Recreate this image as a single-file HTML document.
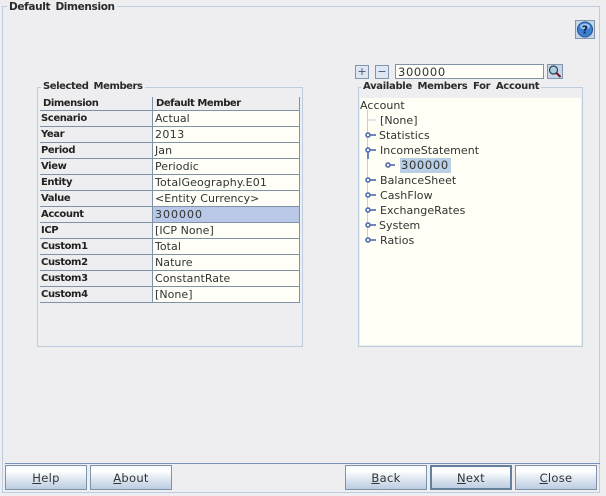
<!DOCTYPE html>
<html><head><meta charset="utf-8">
<style>
html,body{margin:0;padding:0}
body{width:606px;height:496px;overflow:hidden;background:#eeeef0;position:relative;font-family:"DejaVu Sans","Liberation Sans",sans-serif;font-size:11px;color:#222}
div{position:absolute;box-sizing:border-box;white-space:nowrap}
.gb{border:1px solid #bccde2}
.lg{background:#eeeef0;font-weight:bold;font-size:10px;color:#2a2a2a;line-height:12px;padding:0 2px;letter-spacing:-.42px;word-spacing:2px}
.rh{left:40px;width:113px;height:16px;border-bottom:1px solid #7f93a8;border-right:1px solid #7f93a8;font-weight:bold;font-size:10px;line-height:15px;padding-left:1px;color:#222;background:#eeeef0;letter-spacing:-.4px}
.rc{left:153px;width:147px;height:16px;border-bottom:1px solid #7f93a8;border-right:1px solid #7f93a8;background:#fffff8;line-height:15px;padding-left:2px;letter-spacing:.05px;color:#333}
.t{line-height:15px;letter-spacing:.05px;color:#333;height:15px}
.hd{top:97px;height:14px;border-bottom:1px solid #7f93a8;border-right:1px solid #7f93a8;font-weight:bold;font-size:10px;line-height:14px;padding-left:3px;background:#eeeef0;letter-spacing:-.45px}
.btn{top:465px;height:25px;border:1px solid #7e93aa;background:linear-gradient(#f6f8fb 0,#ffffff 22%,#dfe7f1 55%,#bccde2 100%);text-align:center;line-height:24px;letter-spacing:.3px;font-size:11.5px;color:#333}
.btn u{text-underline-offset:1px}
svg{position:absolute;overflow:visible}
</style></head>
<body>
<div class="gb" style="left:2px;top:6px;width:598px;height:487px"></div>
<div style="left:5px;top:463px;width:595px;height:1px;background:#7b8fc0"></div>
<div class="lg" style="left:7px;top:1px;font-size:10.5px;letter-spacing:-.35px;word-spacing:2px">Default Dimension</div>

<svg style="left:575px;top:20px" width="20" height="19" viewBox="0 0 20 19">
<rect x=".5" y=".5" width="19" height="18" fill="#c6d5e8" stroke="#8097ae"/>
<circle cx="10" cy="9.500" r="7.500" fill="#3d7fd2" stroke="#274f8c"/>
<ellipse cx="10" cy="6.500" rx="5" ry="3" fill="#9cc4ee"/>
<text x="10" y="13.500" font-family="DejaVu Sans" font-size="11" font-weight="bold" fill="#10213f" text-anchor="middle">?</text>
</svg>

<!-- Selected Members -->
<div class="gb" style="left:37px;top:87px;width:266px;height:260px"></div>
<div class="lg" style="left:41px;top:81px">Selected Members</div>
<div class="hd" style="left:40px;width:113px">Dimension</div>
<div class="hd" style="left:153px;width:147px">Default Member</div>

<div class="rh" style="top:111px">Scenario</div><div class="rc" style="top:111px">Actual</div>
<div class="rh" style="top:127px">Year</div><div class="rc" style="top:127px;letter-spacing:.4px">2013</div>
<div class="rh" style="top:143px">Period</div><div class="rc" style="top:143px">Jan</div>
<div class="rh" style="top:159px">View</div><div class="rc" style="top:159px">Periodic</div>
<div class="rh" style="top:175px">Entity</div><div class="rc" style="top:175px;letter-spacing:.15px">TotalGeography.E01</div>
<div class="rh" style="top:191px">Value</div><div class="rc" style="top:191px">&lt;Entity Currency&gt;</div>
<div class="rh" style="top:207px">Account</div><div class="rc" style="top:207px;background:#b8c8e6;letter-spacing:1px">300000</div>
<div class="rh" style="top:223px">ICP</div><div class="rc" style="top:223px">[ICP None]</div>
<div class="rh" style="top:239px">Custom1</div><div class="rc" style="top:239px">Total</div>
<div class="rh" style="top:255px">Custom2</div><div class="rc" style="top:255px">Nature</div>
<div class="rh" style="top:271px">Custom3</div><div class="rc" style="top:271px">ConstantRate</div>
<div class="rh" style="top:287px">Custom4</div><div class="rc" style="top:287px">[None]</div>

<!-- search row -->
<div style="left:355px;top:65px;width:14px;height:14px;border:1px solid #8097ae;background:#dde6f1;font-size:11px;line-height:11px;text-align:center;color:#40567a">+</div>
<div style="left:375px;top:65px;width:14px;height:14px;border:1px solid #8097ae;background:#dde6f1;font-size:11px;line-height:11px;text-align:center;color:#40567a">−</div>
<div style="left:395px;top:64px;width:149px;height:15px;border:1px solid #7f93a8;background:#fffff8;line-height:14px;padding-left:2px;letter-spacing:.65px;font-size:11.5px;color:#333">300000</div>
<svg style="left:547px;top:64px" width="16" height="15" viewBox="0 0 16 15">
<rect x=".5" y=".5" width="15" height="14" fill="#c6d5e8" stroke="#8097ae"/>
<circle cx="6.500" cy="6" r="4" fill="#a8d0e0" stroke="#33424f" stroke-width="1.200"/>
<path d="M9.500 9l4 4" stroke="#7a1830" stroke-width="2"/>
</svg>

<!-- Available Members -->
<div class="gb" style="left:358px;top:87px;width:225px;height:260px"></div>
<div style="left:360px;top:98px;width:221px;height:247px;background:#fffff6"></div>
<div class="lg" style="left:361px;top:81px;letter-spacing:-.3px;word-spacing:2.4px">Available Members For Account</div>

<div class="t" style="left:360px;top:98px">Account</div>
<svg style="left:360px;top:110px" width="50" height="140" viewBox="0 0 50 140">
<path d="M7.500 0V128M7.500 10H16" stroke="#c3cde6" fill="none"/>
<g stroke="#5a74b8" stroke-width="1.700" fill="#fffff6">
<path d="M10 25h6M10 40h6M8 42v7M30 55h5M10 70h6M10 85h6M10 100h6M10 115h6M10 130h6" fill="none"/>
<circle cx="8" cy="25" r="2"/>
<circle cx="8" cy="40" r="2"/>
<circle cx="28" cy="55" r="2"/>
<circle cx="8" cy="70" r="2"/>
<circle cx="8" cy="85" r="2"/>
<circle cx="8" cy="100" r="2"/>
<circle cx="8" cy="115" r="2"/>
<circle cx="8" cy="130" r="2"/>
</g>
</svg>
<div class="t" style="left:380px;top:113px">[None]</div>
<div class="t" style="left:379px;top:128px">Statistics</div>
<div class="t" style="left:380px;top:143px">IncomeStatement</div>
<div class="t" style="left:400px;top:158px;width:51px;background:#b8cfe6;letter-spacing:.65px;padding-left:1px;font-size:11.5px">300000</div>
<div class="t" style="left:380px;top:173px">BalanceSheet</div>
<div class="t" style="left:380px;top:188px">CashFlow</div>
<div class="t" style="left:380px;top:203px">ExchangeRates</div>
<div class="t" style="left:379px;top:218px">System</div>
<div class="t" style="left:380px;top:233px">Ratios</div>

<!-- buttons -->
<div class="btn" style="left:5px;width:82px"><u>H</u>elp</div>
<div class="btn" style="left:90px;width:82px"><u>A</u>bout</div>
<div class="btn" style="left:345px;width:82px"><u>B</u>ack</div>
<div class="btn" style="left:430px;width:82px;border:2px solid #65809a;line-height:22px"><u>N</u>ext</div>
<div class="btn" style="left:515px;width:82px"><u>C</u>lose</div>
</body></html>
